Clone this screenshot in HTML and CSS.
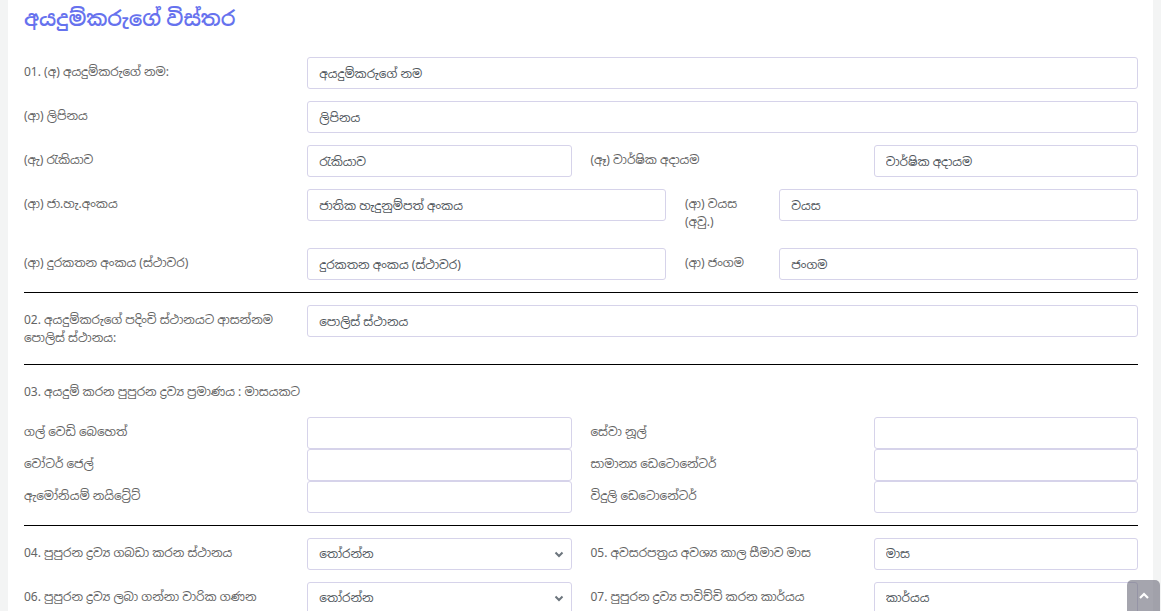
FILE: index.html
```html
<!DOCTYPE html>
<html lang="si">
<head>
<meta charset="utf-8">
<title>අයදුම්කරුගේ විස්තර</title>
<link rel="stylesheet" href="styles.css">
</head>
<body>
<div class="card">
  <h4 class="title">අයදුම්කරුගේ විස්තර</h4>

  <div class="frow">
    <label class="lbl s3">01. (අ) අයදුම්කරුගේ නම:</label>
    <input class="fc s9" type="text" placeholder="අයදුම්කරුගේ නම">
  </div>
  <div class="frow">
    <label class="lbl s3">(ආ) ලිපිනය</label>
    <input class="fc s9" type="text" placeholder="ලිපිනය">
  </div>
  <div class="frow">
    <label class="lbl s3">(ඇ) රැකියාව</label>
    <input class="fc s3" type="text" placeholder="රැකියාව">
    <label class="lbl s3">(ඈ) වාර්ෂික අදායම</label>
    <input class="fc s3" type="text" placeholder="වාර්ෂික අදායම">
  </div>
  <div class="frow">
    <label class="lbl s3">(ආ) ජා.හැ.අංකය</label>
    <input class="fc s4" type="text" placeholder="ජාතික හැදුනුම්පත් අංකය">
    <label class="lbl s1">(ආ) වයස (අවු.)</label>
    <input class="fc s4" type="text" placeholder="වයස">
  </div>
  <div class="frow">
    <label class="lbl s3">(ආ) දුරකතන අංකය (ස්ථාවර)</label>
    <input class="fc s4" type="text" placeholder="දුරකතන අංකය (ස්ථාවර)">
    <label class="lbl s1">(ආ) ජංගම</label>
    <input class="fc s4" type="text" placeholder="ජංගම">
  </div>

  <hr class="rule">

  <div class="frow">
    <label class="lbl s3">02. අයදුම්කරුගේ පදිංචි ස්ථානයට ආසන්නම පොලිස් ස්ථානය:</label>
    <input class="fc s9" type="text" placeholder="පොලිස් ස්ථානය">
  </div>

  <hr class="rule">

  <div class="frow head">
    <label class="lbl s12">03. අයදුම් කරන පුපුරන ද්‍රව්‍ය ප්‍රමාණය : මාසයකට</label>
  </div>
  <div class="frow tight">
    <label class="lbl s3">ගල් වෙඩි බෙහෙත්</label>
    <input class="fc s3" type="text">
    <label class="lbl s3">සේවා නූල්</label>
    <input class="fc s3" type="text">
  </div>
  <div class="frow tight">
    <label class="lbl s3">වෝටර් ජෙල්</label>
    <input class="fc s3" type="text">
    <label class="lbl s3">සාමාන්‍ය ඩෙටොනේටර්</label>
    <input class="fc s3" type="text">
  </div>
  <div class="frow">
    <label class="lbl s3">ඇමෝනියම් නයිට්‍රේට්</label>
    <input class="fc s3" type="text">
    <label class="lbl s3">විදුලි ඩෙටොනේටර්</label>
    <input class="fc s3" type="text">
  </div>

  <hr class="rule">

  <div class="frow">
    <label class="lbl s3">04. පුපුරන ද්‍රව්‍ය ගබඩා කරන ස්ථානය</label>
    <div class="sel s3">
      <select class="fc"><option>තෝරන්න</option></select>
      <svg class="chev" width="10" height="8" viewBox="0 0 10 8"><path d="M1.5 2.5 L5 6 L8.5 2.5" fill="none" stroke="#6c757d" stroke-width="2"/></svg>
    </div>
    <label class="lbl s3">05. අවසරපත්‍රය අවශ්‍ය කාල සීමාව මාස</label>
    <input class="fc s3" type="text" placeholder="මාස">
  </div>
  <div class="frow">
    <label class="lbl s3">06. පුපුරන ද්‍රව්‍ය ලබා ගන්නා වාරික ගණන</label>
    <div class="sel s3">
      <select class="fc"><option>තෝරන්න</option></select>
      <svg class="chev" width="10" height="8" viewBox="0 0 10 8"><path d="M1.5 2.5 L5 6 L8.5 2.5" fill="none" stroke="#6c757d" stroke-width="2"/></svg>
    </div>
    <label class="lbl s3">07. පුපුරන ද්‍රව්‍ය පාවිච්චි කරන කාර්යය</label>
    <input class="fc s3" type="text" placeholder="කාර්යය">
  </div>
</div>

<button class="to-top" type="button" aria-label="Top">
  <svg width="12" height="8" viewBox="0 0 12 8"><path d="M2 6 L6 2 L10 6" fill="none" stroke="#fff" stroke-width="2.2"/></svg>
</button>
</body>
</html>
```

FILE: styles.css
```css
html, body {
  margin: 0;
  padding: 0;
}
body {
  background: #f3f4f4;
  font-family: "Noto Sans", "Noto Sans Sinhala", "Iskoola Pota", sans-serif;
  padding: 0 8px;
  min-height: 611px;
}
.card {
  background: #fff;
  padding: 5px 15px 40px 16px;
}
.title {
  margin: 0 0 26px;
  font-size: 20.5px;
  line-height: 26px;
  font-weight: 600;
  color: #6672ee;
}
.frow {
  display: grid;
  grid-template-columns: repeat(12, 1fr);
  column-gap: 19px;
  margin-bottom: 12px;
}
.frow.tight {
  margin-bottom: 0;
}
.frow.head {
  margin-bottom: 10px;
}
.s1 { grid-column: span 1; }
.s3 { grid-column: span 3; }
.s4 { grid-column: span 4; }
.s9 { grid-column: span 9; }
.s12 { grid-column: span 12; }
.lbl {
  padding: 6px 0;
  font-size: 12px;
  line-height: 17.5px;
  color: #646464;
}
.fc {
  box-sizing: border-box;
  width: 100%;
  height: 32px;
  margin: 0;
  padding: 0 11px;
  border: 1px solid #d6d3ea;
  border-radius: 3px;
  background: #fff;
  font-family: inherit;
  font-size: 12px;
  color: #50565c;
  outline: none;
}
.fc::placeholder {
  color: #50565c;
  opacity: 1;
}
.sel {
  position: relative;
}
.sel select {
  appearance: none;
  -webkit-appearance: none;
  padding-right: 28px;
}
.chev {
  position: absolute;
  right: 8px;
  top: 12px;
  pointer-events: none;
}
.rule {
  border: 0;
  border-top: 1px solid #000;
  margin: 0 0 12px;
  height: 0;
}
.to-top {
  position: fixed;
  right: 1px;
  bottom: -10px;
  width: 33px;
  height: 41px;
  border: 0;
  border-radius: 5px;
  background: rgba(110, 110, 125, 0.62);
  padding: 0 0 10px;
  display: flex;
  align-items: center;
  justify-content: center;
}
```
